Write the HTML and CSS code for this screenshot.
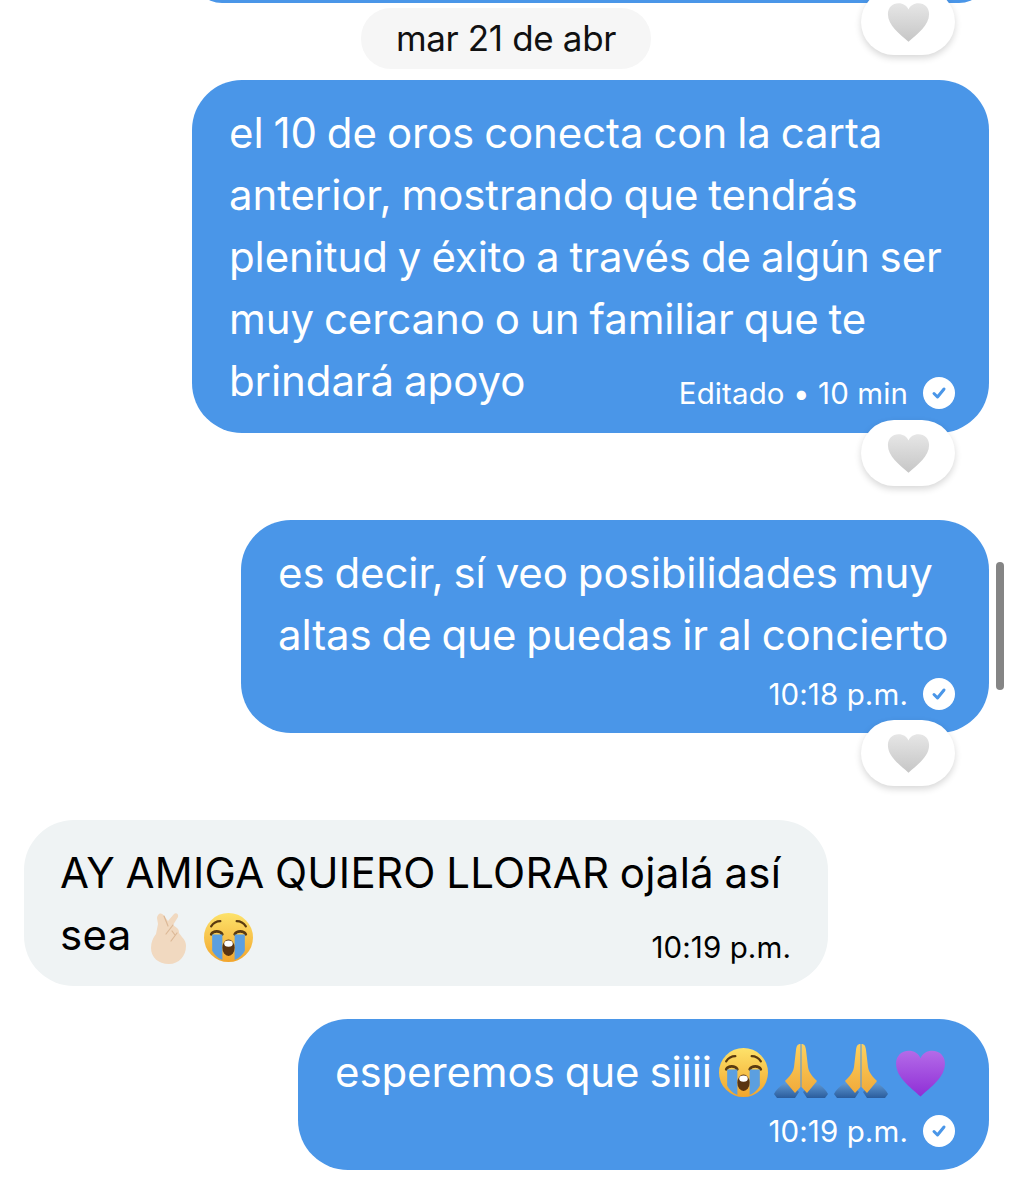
FILE: index.html
```html
<!DOCTYPE html>
<html lang="es">

<head>
    <meta charset="UTF-8">
    <meta name="viewport" content="width=device-width, initial-scale=1.0">
    <title>Mensajes</title>
    <link rel="stylesheet" href="styles.css">
</head>

<body>
    <svg class="defs" width="0" height="0">
        <defs>
            <linearGradient id="grad-gray" x1="0" y1="0" x2="0" y2="1">
                <stop offset="0" stop-color="#e6e6e6" />
                <stop offset="1" stop-color="#c6c6c6" />
            </linearGradient>
            <linearGradient id="grad-purple" x1="0" y1="0" x2="0" y2="1">
                <stop offset="0" stop-color="#b46be8" />
                <stop offset="1" stop-color="#8f2fd6" />
            </linearGradient>
            <linearGradient id="grad-face" x1="0" y1="0" x2="0" y2="1">
                <stop offset="0" stop-color="#fde26a" />
                <stop offset="1" stop-color="#f2a52c" />
            </linearGradient>
            <linearGradient id="grad-palm" x1="0" y1="0" x2="0" y2="1">
                <stop offset="0" stop-color="#fdd15f" />
                <stop offset="1" stop-color="#f0aa3a" />
            </linearGradient>
            <linearGradient id="grad-sleeve" x1="0" y1="0" x2="0" y2="1">
                <stop offset="0" stop-color="#6aa5df" />
                <stop offset="1" stop-color="#2a5c9c" />
            </linearGradient>
            <symbol id="heart" viewBox="0 0 48 44">
                <path d="M24 44C14 35 1 26 1 13 1 6 6 1 13 1c5 0 9 2.500 11 7 2-4.500 6-7 11-7 7 0 12 5 12 12 0 13-13 22-23 31z" />
            </symbol>
            <symbol id="check" viewBox="0 0 32 32">
                <circle cx="16" cy="16" r="16" fill="#fff" />
                <path d="M11 16.500l3.500 3.500 6.500-8" fill="none" stroke="#4a96e8" stroke-width="3" stroke-linecap="round" stroke-linejoin="round" />
            </symbol>
            <symbol id="crying" viewBox="0 0 48 48">
                <circle cx="24" cy="24" r="24" fill="url(#grad-face)" />
                <path d="M7 13c2-3 5-5 9-5M41 13c-2-3-5-5-9-5" fill="none" stroke="#5a3a10" stroke-width="2.200" stroke-linecap="round" />
                <path d="M7 21c2-4 9-4 11 0M30 21c2-4 9-4 11 0" fill="none" stroke="#5a3a10" stroke-width="2.500" stroke-linecap="round" />
                <path d="M8 21h10v25c-5-2-8-5-10-9zM30 21h10v16c-2 4-5 7-10 9z" fill="#5b9fe0" />
                <ellipse cx="24" cy="34" rx="6" ry="8" fill="#5a3410" />
                <ellipse cx="24" cy="30" rx="4.200" ry="3" fill="#fff" />
            </symbol>
            <symbol id="prayer" viewBox="0 0 54 54">
                <path d="M0 50c3-6 10-11 15-14l10 12-4 6H3zM54 50c-3-6-10-11-15-14L29 48l4 6h18z" fill="url(#grad-sleeve)" />
                <path d="M26.500 0c-3 0-4 2-4.500 6l-2 17c-1 6-5 10-9 14l10 12 5.500-6zM27.500 0c3 0 4 2 4.500 6l2 17c1 6 5 10 9 14L33 49l-5.500-6z" fill="url(#grad-palm)" />
            </symbol>
            <symbol id="fingers" viewBox="0 0 36 52">
                <path d="M8 2c2-1 4 0 5 2l4 5 6-7c2-2 5 0 4 3l-5 8 4 3c2 2 2 3 2 5l3 4c3 3 4 6 4 9 0 10-7 18-17 18C7 52 0 45 0 36c0-6 2-10 5-14L7 12 6 6c0-2 1-3 2-4z" fill="#f1d9c0" />
                <path d="M13 4l4 10M22 13l-7 9M26 21l-6 8M21 19l3 4" fill="none" stroke="#dcb896" stroke-width="1.200" stroke-linecap="round" />
            </symbol>
        </defs>
    </svg>

    <main class="chat">
        <div class="bubble-wrap sent stub-wrap">
            <div class="bubble stub"></div>
            <div class="reaction"><svg class="heart-icon"><use href="#heart" /></svg></div>
        </div>

        <div class="date-row">
            <div class="date-pill">mar 21 de abr</div>
        </div>

        <div class="bubble-wrap sent first">
            <div class="bubble w-797">
                <div class="inline-foot">
                    <p>el 10 de oros conecta con la carta<br>anterior, mostrando que tendrás<br>plenitud y éxito a través de algún ser<br>muy cercano o un familiar que te<br>brindará apoyo</p>
                    <div class="meta"><span>Editado • 10 min</span><svg class="check"><use href="#check" /></svg></div>
                </div>
            </div>
            <div class="reaction"><svg class="heart-icon"><use href="#heart" /></svg></div>
        </div>

        <div class="bubble-wrap sent gap-large">
            <div class="bubble w-748">
                <p>es decir, sí veo posibilidades muy<br>altas de que puedas ir al concierto</p>
                <div class="meta meta-below"><span>10:18 p.m.</span><svg class="check"><use href="#check" /></svg></div>
            </div>
            <div class="reaction"><svg class="heart-icon"><use href="#heart" /></svg></div>
        </div>

        <div class="bubble-wrap received gap-large">
            <div class="bubble w-804">
                <div class="inline-foot">
                    <p>AY AMIGA QUIERO LLORAR ojalá así<br>sea <svg class="emoji hand"><use href="#fingers" /></svg><svg class="emoji cry-left"><use href="#crying" /></svg></p>
                    <div class="meta"><span>10:19 p.m.</span></div>
                </div>
            </div>
        </div>

        <div class="bubble-wrap sent gap-small">
            <div class="bubble w-691">
                <p>esperemos que siiii<svg class="emoji cry"><use href="#crying" /></svg><svg class="emoji pray"><use href="#prayer" /></svg><svg class="emoji pray"><use href="#prayer" /></svg><svg class="emoji purple"><use href="#heart" /></svg></p>
                <div class="meta meta-below"><span>10:19 p.m.</span><svg class="check"><use href="#check" /></svg></div>
            </div>
        </div>
    </main>

    <div class="scrollbar"></div>
</body>

</html>
```

FILE: styles.css
```css
* {
    box-sizing: border-box;
}

html,
body {
    margin: 0;
    height: 1200px;
    overflow: hidden;
    background: #fff;
}

body {
    position: relative;
    font-family: "Inter", "Liberation Sans", sans-serif;
    color: #0f1419;
}

.defs {
    position: absolute;
}

.chat {
    display: flex;
    flex-direction: column;
    padding: 0 23px 0 24px;
}

.bubble-wrap {
    position: relative;
    display: flex;
}

.sent {
    justify-content: flex-end;
}

.received {
    justify-content: flex-start;
}

.first {
    margin-top: 11px;
}

.gap-large {
    margin-top: 87px;
}

.gap-small {
    margin-top: 33px;
}

.bubble {
    padding: 22px 34px 21px 37px;
    border-radius: 50px;
    background: #4a96e8;
    color: #fff;
}

.received .bubble {
    background: #eff3f4;
    color: #000;
    padding: 22px 37px 20px 36px;
}

.bubble p {
    margin: 0;
    font-size: 42px;
    line-height: 62px;
    letter-spacing: -0.1px;
    word-spacing: -1.7px;
    white-space: nowrap;
}

.received .bubble p {
    letter-spacing: 0.3px;
}

.w-797 {
    width: 797px;
}

.w-748 {
    width: 748px;
    padding-bottom: 25px;
}

.w-804 {
    width: 804px;
}

.w-691 {
    width: 691px;
    padding-bottom: 25px;
}

.stub-wrap {
    height: 3px;
}

.stub {
    width: 797px;
    height: 60px;
    flex: none;
    margin-top: -57px;
    padding: 0;
    border-radius: 44px;
}

.date-row {
    display: flex;
    justify-content: center;
    margin-top: 5px;
    padding-right: 1px;
}

.date-pill {
    width: 290px;
    height: 61px;
    border-radius: 30px;
    background: #f6f6f6;
    font-size: 35px;
    line-height: 61px;
    letter-spacing: -0.35px;
    text-align: center;
    color: #111;
}

.inline-foot {
    position: relative;
}

.inline-foot .meta {
    position: absolute;
    right: 0;
    bottom: 0;
    height: 38px;
}

.meta {
    display: flex;
    align-items: center;
    justify-content: flex-end;
    gap: 15px;
    font-size: 29.500px;
    letter-spacing: 0.1px;
    white-space: nowrap;
}

.meta-below {
    height: 28px;
    margin-top: 14px;
}

.check {
    width: 32px;
    height: 32px;
    flex: none;
}

.reaction {
    position: absolute;
    right: 34px;
    bottom: -53px;
    display: flex;
    align-items: center;
    justify-content: center;
    width: 94px;
    height: 66px;
    border-radius: 33px;
    background: #fff;
    box-shadow: 0 3px 7px rgba(0, 0, 0, 0.16);
}

.stub-wrap .reaction {
    bottom: -52px;
}

.heart-icon {
    width: 43px;
    height: 42px;
    fill: url(#grad-gray);
}

.emoji {
    display: inline-block;
}

.hand {
    width: 36px;
    height: 52px;
    margin-left: 9px;
    vertical-align: -14px;
}

.cry-left {
    width: 49px;
    height: 49px;
    margin-left: 17px;
    vertical-align: -12px;
}

.cry {
    width: 49px;
    height: 49px;
    margin-left: 7px;
    vertical-align: -10px;
}

.pray {
    width: 54px;
    height: 54px;
    margin-left: 6px;
    vertical-align: -11px;
}

.purple {
    width: 51px;
    height: 48px;
    margin-left: 7px;
    fill: url(#grad-purple);
    vertical-align: -10px;
}

.scrollbar {
    position: absolute;
    top: 562px;
    left: 996px;
    width: 8px;
    height: 128px;
    border-radius: 4px;
    background: #858585;
}
```
